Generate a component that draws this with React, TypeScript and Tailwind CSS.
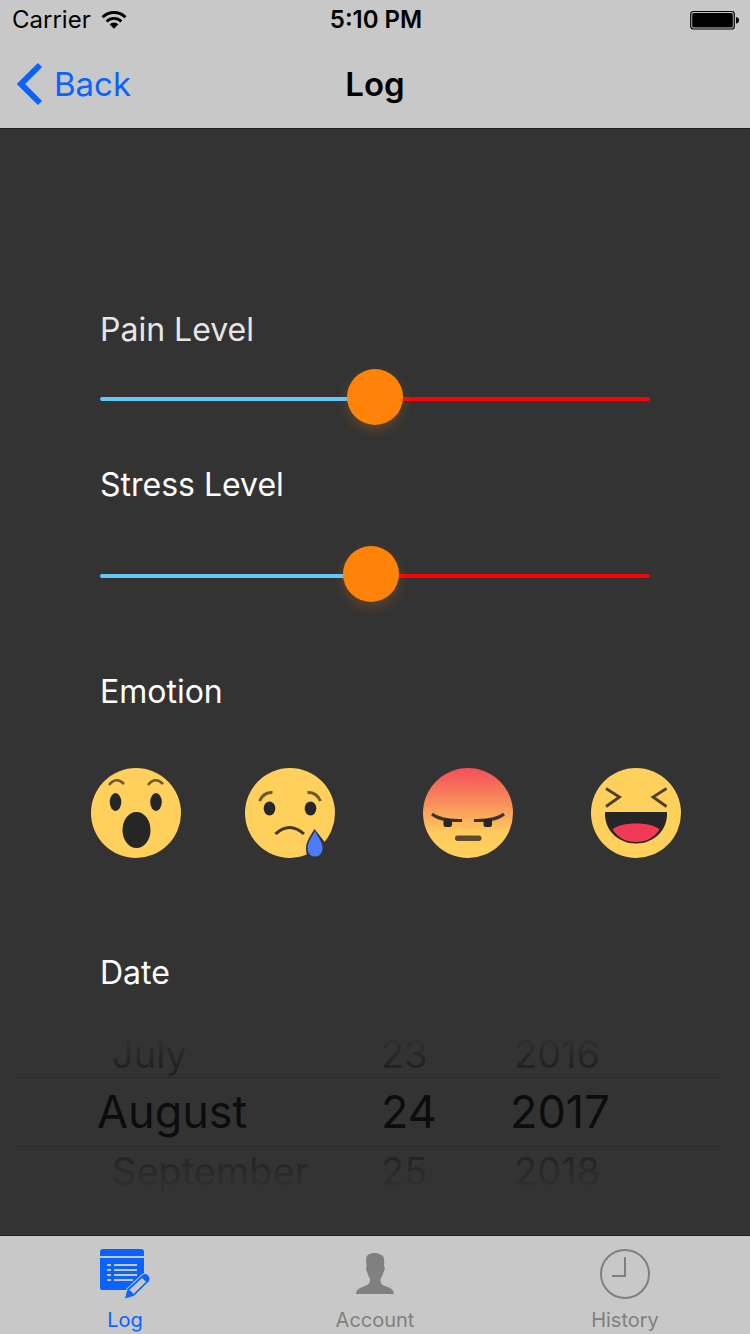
import { useState } from "react";
import type { CSSProperties, ReactNode } from "react";

const MONTHS = ["January", "February", "March", "April", "May", "June", "July", "August", "September", "October", "November", "December"];
const DAYS = Array.from({ length: 31 }, (_, i) => String(i + 1));
const YEARS = Array.from({ length: 40 }, (_, i) => String(2000 + i));

function StatusBar() {
  return (
    <div className="grid h-10 grid-cols-3 items-center pl-3 pr-[10px] text-[24px] leading-[40px]">
      <div className="flex items-center gap-[10px]">
        <span>Carrier</span>
        <svg width="26" height="20" viewBox="0 0 26 20" fill="none" stroke="#000" aria-hidden="true">
          <path d="M1.6 7.2a16.2 16.2 0 0 1 22.8 0" strokeWidth="2.8" />
          <path d="M5.6 11.4a10.5 10.5 0 0 1 14.8 0" strokeWidth="2.8" />
          <path d="M8.6 14.3a6.2 6.2 0 0 1 8.8 0L13 18.8z" fill="#000" stroke="none" />
        </svg>
      </div>
      <span className="text-center font-semibold">5:10 PM</span>
      <svg className="justify-self-end" width="50" height="20" viewBox="0 0 50 20" aria-hidden="true">
        <rect x="0.75" y="1.500" width="43.5" height="17.5" rx="2.5" fill="none" stroke="#000" strokeWidth="1.2" />
        <rect x="2.200" y="3" width="40.600" height="14.500" rx="1.5" fill="#000" />
        <path d="M46 7c2 .3 3 1.500 3 3.300s-1 3-3 3.300z" fill="#000" />
      </svg>
    </div>
  );
}

function LevelSlider({ id, value, onChange }: { id: string; value: number; onChange: (v: number) => void }) {
  return (
    <input
      id={id}
      type="range"
      min={0}
      max={100}
      step={0.1}
      value={value}
      onChange={(e) => onChange(Number(e.target.value))}
      style={{ "--fill": `${value}%` } as CSSProperties}
      className="block h-[60px] w-full cursor-pointer appearance-none bg-transparent [&::-webkit-slider-runnable-track]:h-1 [&::-webkit-slider-runnable-track]:rounded-full [&::-webkit-slider-runnable-track]:bg-[linear-gradient(to_right,#62c8fb_var(--fill),#ff0006_var(--fill))] [&::-webkit-slider-thumb]:-mt-7 [&::-webkit-slider-thumb]:size-14 [&::-webkit-slider-thumb]:appearance-none [&::-webkit-slider-thumb]:rounded-full [&::-webkit-slider-thumb]:bg-[#ff8308] [&::-webkit-slider-thumb]:shadow-[0_5px_12px_rgba(255,131,8,0.22)]"
    />
  );
}

function Emoji({ label, children, fill = "#ffd05c" }: { label: string; children: ReactNode; fill?: string }) {
  return (
    <button type="button" aria-label={label} className="size-[90px] shrink-0 rounded-full">
      <svg width="90" height="90" viewBox="0 0 90 90" fill="none" aria-hidden="true">
        <circle cx="45" cy="45" r="45" fill={fill} />
        {children}
      </svg>
    </button>
  );
}

function Emotions() {
  return (
    <div className="mt-14 flex pl-[91px]">
      <Emoji label="Surprised">
        <g stroke="#6b5934" strokeWidth="2.6">
          <path d="M18 17q7-9 15-1" />
          <path d="M57 17q7-9 15-1" />
        </g>
        <g fill="#262626">
          <ellipse cx="24.500" cy="34" rx="5.800" ry="9" />
          <ellipse cx="65" cy="34" rx="5.800" ry="9" />
          <ellipse cx="45.500" cy="62" rx="14" ry="18" />
        </g>
      </Emoji>
      <div className="w-16" />
      <Emoji label="Sad">
        <g stroke="#6b5934" strokeWidth="3">
          <path d="M14.500 33q4-9 13-8.500" />
          <path d="M75.500 33q-4-9-13-8.500" />
        </g>
        <ellipse cx="24.500" cy="40.500" rx="5.800" ry="7" fill="#262626" />
        <ellipse cx="65.500" cy="40.500" rx="5.800" ry="7" fill="#262626" />
        <path d="M30.500 66q14-13 28.500 0" stroke="#3f3828" strokeWidth="3" />
        <path d="M69.500 61c-3 5-9 13-8.500 20 .2 3 .5 5 1.500 9h14c4-7 5-11 4-15z" fill="#333" />
        <path d="M70 63c-2.500 5-7.500 11-7.500 17 0 5 3 8.500 7.500 8.500s7.500-3.500 7.500-8.500c0-6-5-12-7.500-17z" fill="#4b7dfb" />
      </Emoji>
      <div className="w-[88px]" />
      <Emoji label="Angry" fill="url(#angry-face)">
        <defs>
          <linearGradient id="angry-face" x1="0" y1="0" x2="0" y2="1">
            <stop offset="0" stopColor="#f2535a" />
            <stop offset="0.1" stopColor="#f45c59" />
            <stop offset="0.72" stopColor="#ffcb5d" />
            <stop offset="1" stopColor="#ffd05c" />
          </linearGradient>
        </defs>
        <g stroke="#41332a" strokeWidth="3">
          <path d="M9 46q8 7 30 6.500" />
          <path d="M81 46q-8 7-30 6.500" />
        </g>
        <rect x="20.500" y="51" width="8.500" height="8" rx="2.500" fill="#262626" />
        <rect x="60.500" y="51" width="8.500" height="8" rx="2.500" fill="#262626" />
        <rect x="32" y="67.500" width="26.500" height="5.500" rx="2.700" fill="#5e4c31" />
      </Emoji>
      <div className="w-[78px]" />
      <Emoji label="Laughing">
        <g stroke="#4d4029" strokeWidth="2.800">
          <path d="M15 20.500l13.500 8.500-13.500 9.500" />
          <path d="M75.500 20.500L62 29l13.500 9.500" />
        </g>
        <path d="M14 44h62c1 18-13 31.500-31 31.500S13 62 14 44z" fill="#262626" />
        <path d="M21.500 61.500C29 53.500 61 53.500 68.500 61.500 63 70 55 74 45 74s-18-4-23.500-12.500z" fill="#f03a56" />
      </Emoji>
    </div>
  );
}

function Wheel({ label, items, index, onChange, sidePad, midPad }: { label: string; items: string[]; index: number; onChange: (i: number) => void; sidePad: string; midPad: string }) {
  const last = items.length - 1;
  return (
    <div role="group" aria-label={label} className="flex flex-col">
      <button type="button" disabled={index === 0} onClick={() => onChange(index - 1)} className={`h-[46px] bg-gradient-to-b from-[#2f2f2f] from-20% to-[#222222] to-75% bg-clip-text text-left text-[38px] leading-[46px] text-transparent ${sidePad}`}>
        {items[index - 1] ?? ""}
      </button>
      <output className={`block h-[70px] border-y border-[#282828] text-left text-[45px] leading-[68px] text-[#0c0c0c] ${midPad}`}>{items[index]}</output>
      <button type="button" disabled={index === last} onClick={() => onChange(index + 1)} className={`h-[48px] bg-gradient-to-b from-[#242424] from-20% to-[#303030] to-85% bg-clip-text text-left text-[38px] leading-[48px] text-transparent ${sidePad}`}>
        {items[index + 1] ?? ""}
      </button>
    </div>
  );
}

function TabBar() {
  return (
    <nav className="grid h-[99px] grid-cols-3 border-t border-[#201d22] bg-[#c8c8c8] text-[20px] leading-[24px] text-[#808080]">
      <a href="#log" aria-current="page" className="flex flex-col items-center pt-3 text-[#0a63fe]">
        <svg width="52" height="52" viewBox="0 0 52 52" aria-hidden="true">
          <path d="M1 8V4a3 3 0 0 1 3-3h38a3 3 0 0 1 3 3v4z" fill="currentColor" />
          <path d="M1 10h44v20L34 42H3a2 2 0 0 1-2-2z" fill="currentColor" />
          <g fill="#c8c8c8">
            <path d="M8 16h4v2H8zM8 21h4v2H8zM8 26h4v2H8zM8 31h4v2H8z" />
            <path d="M15 16h23v2H15zM15 21h23v2H15zM15 26h23v2H15zM15 31h19v2H15z" />
          </g>
          <path d="M26 50.500l2.500-9.500L43.500 27q3-2 5.500.5t.8 5.800L35 47.800z" fill="currentColor" stroke="#c8c8c8" strokeWidth="2" />
          <path d="M26 50.500l2.500-9.500L43.500 27q3-2 5.500.5t.8 5.800L35 47.800z" fill="currentColor" />
          <path d="M30 42.300L43 30l4 3.800L34.300 46.300l-1.300-2.600z" fill="#c8c8c8" />
        </svg>
        <span className="mt-2">Log</span>
      </a>
      <a href="#account" className="flex flex-col items-center pt-3">
        <svg width="52" height="52" viewBox="0 0 52 52" fill="currentColor" aria-hidden="true">
          <path d="M17.200 10.500C17.500 6.500 21.500 5 26 5c2.500 0 4 .6 5.200 1.600 3 .6 4.100 3 4 6.900l-.2 5c1.200.2 1 3-.6 6-.6 2.800-1.600 4.500-2.800 6-.2 4 .5 6 4 7.300 5 2 9.100 3 9.400 8.200H7c.3-5.200 4.600-6.200 9.500-8.200 3.600-1.300 4.700-3.300 4.500-7.300-1.300-1.600-2.200-3.500-2.700-6-1.200-2.500-1.800-5.600-.6-6-.5-3-.7-5.500-.5-8z" />
        </svg>
        <span className="mt-2">Account</span>
      </a>
      <a href="#history" className="flex flex-col items-center pt-3">
        <svg width="52" height="52" viewBox="0 0 52 52" fill="none" stroke="currentColor" strokeWidth="2" aria-hidden="true">
          <circle cx="26" cy="26" r="24" />
          <path d="M26 9v19H13" />
        </svg>
        <span className="mt-2">History</span>
      </a>
    </nav>
  );
}

export default function App() {
  const [pain, setPain] = useState(50);
  const [stress, setStress] = useState(49.2);
  const [month, setMonth] = useState(7);
  const [day, setDay] = useState(23);
  const [year, setYear] = useState(17);

  return (
    <div className="flex min-h-screen flex-col bg-[#333333] font-['Inter','Liberation_Sans',sans-serif]">
      <header className="border-b border-[#222222] bg-[#c8c8c8] text-black">
        <StatusBar />
        <div className="grid h-[88px] grid-cols-3 items-center text-[33px] leading-[40px]">
          <a href="#back" className="flex items-center gap-[11px] pl-4 text-[#0a63fe]">
            <svg width="27" height="44" viewBox="0 0 27 44" fill="none" stroke="currentColor" strokeWidth="6" aria-hidden="true">
              <path d="M24 3L5 22l19 19" />
            </svg>
            Back
          </a>
          <h1 className="text-center font-semibold">Log</h1>
        </div>
      </header>

      <main className="flex-1 pt-[181px] text-[32px] leading-[40px] text-white">
        <div className="px-[100px]">
          <label htmlFor="pain" className="block text-[#e6e6e6]">Pain Level</label>
          <div className="mt-[19px]">
            <LevelSlider id="pain" value={pain} onChange={setPain} />
          </div>
          <label htmlFor="stress" className="mt-9 block">Stress Level</label>
          <div className="mt-[41px]">
            <LevelSlider id="stress" value={stress} onChange={setStress} />
          </div>
          <h2 className="mt-[66px]">Emotion</h2>
        </div>
        <Emotions />
        <h2 className="mt-[95px] px-[100px]">Date</h2>
        <div className="ml-[15px] mr-[30px] mt-[38px] grid grid-cols-[352fr_125fr_228fr]">
          <Wheel label="Month" items={MONTHS} index={month} onChange={setMonth} sidePad="pl-[97px]" midPad="pl-[82px]" />
          <Wheel label="Day" items={DAYS} index={day} onChange={setDay} sidePad="pl-[14px]" midPad="pl-[14px]" />
          <Wheel label="Year" items={YEARS} index={year} onChange={setYear} sidePad="pl-[22px]" midPad="pl-[18px]" />
        </div>
      </main>
      <TabBar />
    </div>
  );
}
